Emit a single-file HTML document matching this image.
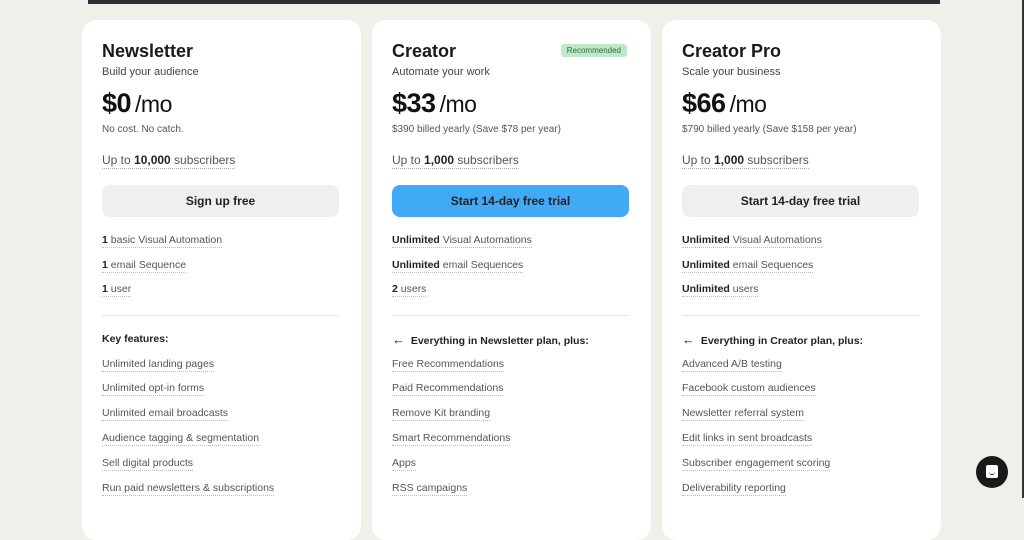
<!DOCTYPE html>
<html><head><style>
*{margin:0;padding:0;box-sizing:border-box}
body{width:1024px;height:498px;overflow:hidden;background:#f1efe9;font-family:"Liberation Sans",sans-serif;color:#222;position:relative}
.top{position:absolute;left:88px;top:0;width:852px;height:4px;background:#2d2f36}
.rline{position:absolute;right:0;top:0;width:2px;height:498px;background:#333}
.card{position:absolute;top:20px;width:279px;height:520px;background:#fff;border-radius:14px;padding:0 20px}
.t{position:absolute;left:20px;top:21px;font-size:18px;font-weight:bold;color:#1a1a1a}
.s{position:absolute;left:20px;top:46px;font-size:11px;color:#444}
.p{position:absolute;left:20px;top:68px;font-size:27px;font-weight:bold;color:#111;letter-spacing:-0.5px}
.p span{font-weight:normal;font-size:23px;margin-left:4px}
.n{position:absolute;left:20px;top:104px;font-size:10px;color:#555}
.u{position:absolute;left:20px;top:133px;font-size:12px;color:#555;border-bottom:1px dotted #aaa;line-height:15px}
.u b{color:#222}
.btn{position:absolute;left:20px;top:165px;width:237px;height:32px;border-radius:8px;background:#efefef;font-size:12px;font-weight:bold;text-align:center;line-height:32px;color:#222}
.btn.blue{background:#40aaf7}
.f{position:absolute;left:20px;font-size:10.5px;color:#555;border-bottom:1px dotted #bbb;line-height:13px}
.f b{color:#222}
.hr{position:absolute;left:20px;top:295px;width:237px;height:1px;background:#e6e6e6}
.k{position:absolute;left:20px;top:313px;font-size:10.5px;font-weight:bold;color:#222;line-height:13px}
.k span{font-size:13px;font-weight:normal;line-height:13px}
.tag{position:absolute;right:24px;top:24px;background:#bfe8c8;color:#2b6a3a;font-size:8px;padding:2px 6px;border-radius:3px}
.chat{position:absolute;left:976px;top:456px;width:32px;height:32px;border-radius:50%;background:#1a1a1a}
.chat i{position:absolute;left:10px;top:9px;width:12px;height:13px;background:#fff;border-radius:2px}
.chat i:after{content:"";position:absolute;left:3px;top:6px;width:6px;height:3px;border-bottom:1px solid #1a1a1a;border-radius:0 0 4px 4px}
</style></head><body>
<div class="top"></div><div class="rline"></div>

<div class="card" style="left:82px">
<div class="t">Newsletter</div><div class="s">Build your audience</div>
<div class="p">$0<span>/mo</span></div><div class="n">No cost. No catch.</div>
<div class="u">Up to <b>10,000</b> subscribers</div>
<div class="btn">Sign up free</div>
<div class="f" style="top:214px"><b>1</b> basic Visual Automation</div>
<div class="f" style="top:239px"><b>1</b> email Sequence</div>
<div class="f" style="top:263px"><b>1</b> user</div>
<div class="hr"></div>
<div class="k">Key features:</div>
<div class="f" style="top:338px">Unlimited landing pages</div>
<div class="f" style="top:362px">Unlimited opt-in forms</div>
<div class="f" style="top:387px">Unlimited email broadcasts</div>
<div class="f" style="top:412px">Audience tagging &amp; segmentation</div>
<div class="f" style="top:437px">Sell digital products</div>
<div class="f" style="top:462px">Run paid newsletters &amp; subscriptions</div>
</div>

<div class="card" style="left:372px">
<div class="tag">Recommended</div>
<div class="t">Creator</div><div class="s">Automate your work</div>
<div class="p">$33<span>/mo</span></div><div class="n">$390 billed yearly (Save $78 per year)</div>
<div class="u">Up to <b>1,000</b> subscribers</div>
<div class="btn blue">Start 14-day free trial</div>
<div class="f" style="top:214px"><b>Unlimited</b> Visual Automations</div>
<div class="f" style="top:239px"><b>Unlimited</b> email Sequences</div>
<div class="f" style="top:263px"><b>2</b> users</div>
<div class="hr"></div>
<div class="k"><span>&#8592;</span>&nbsp; Everything in Newsletter plan, plus:</div>
<div class="f" style="top:338px">Free Recommendations</div>
<div class="f" style="top:362px">Paid Recommendations</div>
<div class="f" style="top:387px">Remove Kit branding</div>
<div class="f" style="top:412px">Smart Recommendations</div>
<div class="f" style="top:437px">Apps</div>
<div class="f" style="top:462px">RSS campaigns</div>
</div>

<div class="card" style="left:662px">
<div class="t">Creator Pro</div><div class="s">Scale your business</div>
<div class="p">$66<span>/mo</span></div><div class="n">$790 billed yearly (Save $158 per year)</div>
<div class="u">Up to <b>1,000</b> subscribers</div>
<div class="btn">Start 14-day free trial</div>
<div class="f" style="top:214px"><b>Unlimited</b> Visual Automations</div>
<div class="f" style="top:239px"><b>Unlimited</b> email Sequences</div>
<div class="f" style="top:263px"><b>Unlimited</b> users</div>
<div class="hr"></div>
<div class="k"><span>&#8592;</span>&nbsp; Everything in Creator plan, plus:</div>
<div class="f" style="top:338px">Advanced A/B testing</div>
<div class="f" style="top:362px">Facebook custom audiences</div>
<div class="f" style="top:387px">Newsletter referral system</div>
<div class="f" style="top:412px">Edit links in sent broadcasts</div>
<div class="f" style="top:437px">Subscriber engagement scoring</div>
<div class="f" style="top:462px">Deliverability reporting</div>
</div>

<div class="chat"><i></i></div>
</body></html>
